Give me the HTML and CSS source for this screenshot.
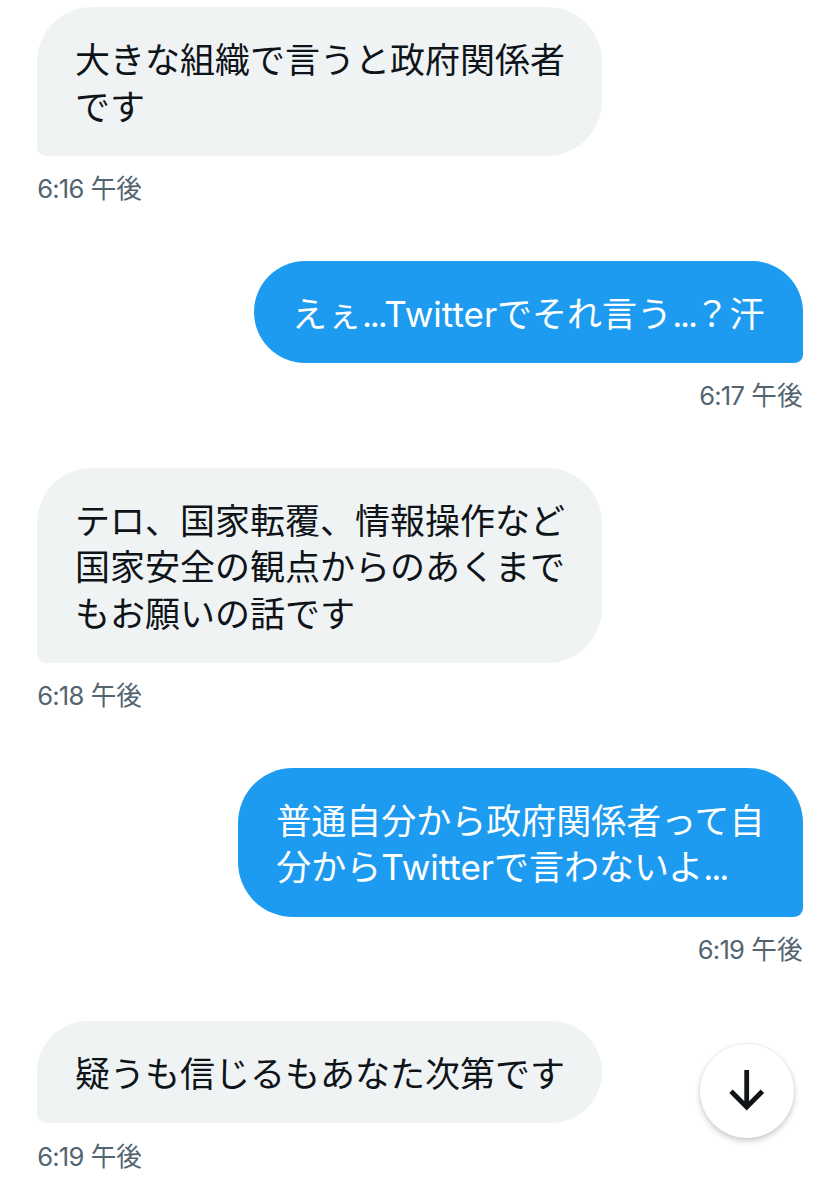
FILE: index.html
```html
<!doctype html>
<html lang="ja">
<head>
	<meta charset="utf-8" />
	<meta name="viewport" content="width=device-width, initial-scale=1.0" />
	<title>メッセージ</title>
	<link rel="stylesheet" href="styles.css">
</head>
<body>
	<main class="chat">
		<div class="message received">
			<p class="bubble">大きな組織で言うと政府関係者<br>です</p>
			<time><span class="clock">6:16</span> 午後</time>
		</div>

		<div class="message sent">
			<p class="bubble">えぇ<span class="dots">...</span>Twitterでそれ言う<span class="dots">...</span>？汗</p>
			<time><span class="clock">6:17</span> 午後</time>
		</div>

		<div class="message received">
			<p class="bubble">テロ、国家転覆、情報操作など<br>国家安全の観点からのあくまで<br>もお願いの話です</p>
			<time><span class="clock">6:18</span> 午後</time>
		</div>

		<div class="message sent">
			<p class="bubble">普通自分から政府関係者って自<br>分からTwitterで言わないよ<span class="dots">...</span></p>
			<time><span class="clock">6:19</span> 午後</time>
		</div>

		<div class="message received">
			<p class="bubble">疑うも信じるもあなた次第です</p>
			<time><span class="clock">6:19</span> 午後</time>
		</div>
	</main>

	<button class="scroll-down" aria-label="最新のメッセージへ">
		<svg viewBox="0 0 40 44" width="40" height="44">
			<path d="M19.700 1V38M4 22.300L19.700 38L35.400 22.300" />
		</svg>
	</button>
</body>
</html>
```

FILE: styles.css
```css
html, body {
	margin: 0;
	height: 100%;
	overflow: hidden;
	background: #fff;
	font-family: Inter, "Noto Sans CJK JP", sans-serif;
}

.chat {
	display: flex;
	flex-direction: column;
	padding: 7.3px 37.5px 0 37.2px;
}

.message {
	display: flex;
	flex-direction: column;
	align-items: flex-start;
}

.message.sent {
	align-items: flex-end;
}

.bubble {
	margin: 0;
	padding: 30px 37px 25.7px 37.8px;
	font-size: 35px;
	line-height: 46.6px;
	white-space: nowrap;
	border-radius: 55px 55px 55px 9px;
	background: #eff3f4;
	color: #0f1419;
}

.sent .bubble {
	padding-right: 38px;
	border-radius: 55px 55px 9px 55px;
	background: #1d9bf0;
	color: #fff;
}

.dots {
	margin-right: -1.3px;
	letter-spacing: -2.2px;
}

time {
	height: 104.6px;
	padding-top: 15.3px;
	box-sizing: border-box;
	font-size: 25.6px;
	line-height: 36px;
	color: #536471;
}

.clock {
	letter-spacing: -0.8px;
}

.scroll-down {
	position: fixed;
	left: 700px;
	top: 1044px;
	width: 94px;
	height: 94px;
	padding: 0;
	display: flex;
	align-items: center;
	justify-content: center;
	border: none;
	border-radius: 50%;
	background: #fff;
	box-shadow: 0 3px 6px rgba(0, 0, 0, 0.2), 0 0 3px rgba(0, 0, 0, 0.1);
}

.scroll-down path {
	fill: none;
	stroke: #0f1419;
	stroke-width: 4.8;
}
```
